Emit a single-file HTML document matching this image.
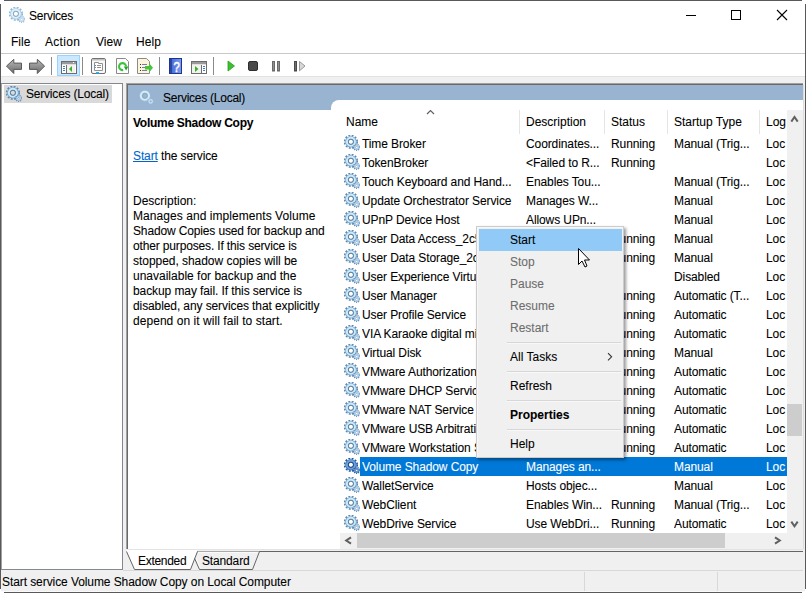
<!DOCTYPE html><html><head><meta charset="utf-8"><style>
*{margin:0;padding:0;box-sizing:border-box}
html,body{width:806px;height:593px;overflow:hidden;background:#fff;font-family:"Liberation Sans", sans-serif;font-size:12px;color:#000;-webkit-text-stroke:0.08px}
.a{position:absolute}
.t{position:absolute;white-space:nowrap;line-height:19px}
.r{letter-spacing:-0.1px}
</style></head><body>
<svg width="0" height="0" style="position:absolute">
<symbol id="gear" viewBox="0 0 16 16">
  <circle cx="6.9" cy="6.8" r="6.3" fill="none" stroke="#5f89b4" stroke-width="1.7" stroke-dasharray="1.9 1.4"/>
  <path d="M1.3000000000000007 6.8 a5.6 5.6 0 1 0 11.2 0 a5.6 5.6 0 1 0 -11.2 0 Z M4.7 6.8 a2.2 2.2 0 1 0 4.4 0 a2.2 2.2 0 1 0 -4.4 0 Z" fill="#719bc3" fill-rule="evenodd"/>
  <circle cx="6.9" cy="6.8" r="4.0" fill="none" stroke="#c8eaf9" stroke-width="2.1"/>
  <circle cx="6.9" cy="6.8" r="2.55" fill="none" stroke="#56708a" stroke-width="0.75"/>
  <circle cx="12.7" cy="12.3" r="3.05" fill="none" stroke="#5f89b4" stroke-width="1.3" stroke-dasharray="1.0 1.13"/>
  <path d="M10.1 12.3 a2.6 2.6 0 1 0 5.2 0 a2.6 2.6 0 1 0 -5.2 0 Z M11.799999999999999 12.3 a0.9 0.9 0 1 0 1.8 0 a0.9 0.9 0 1 0 -1.8 0 Z" fill="#8cb0d2" fill-rule="evenodd"/>
  <circle cx="12.7" cy="12.3" r="1.7" fill="none" stroke="#cde6f5" stroke-width="0.8"/>
</symbol>
<symbol id="gearS" viewBox="0 0 16 16">
  <circle cx="6.9" cy="6.8" r="6.3" fill="none" stroke="#1f5aa6" stroke-width="1.7" stroke-dasharray="1.9 1.4"/>
  <path d="M1.3000000000000007 6.8 a5.6 5.6 0 1 0 11.2 0 a5.6 5.6 0 1 0 -11.2 0 Z M4.7 6.8 a2.2 2.2 0 1 0 4.4 0 a2.2 2.2 0 1 0 -4.4 0 Z" fill="#2d68b2" fill-rule="evenodd"/>
  <circle cx="6.9" cy="6.8" r="4.0" fill="none" stroke="#6e9fd6" stroke-width="2.1"/>
  <circle cx="6.9" cy="6.8" r="2.55" fill="none" stroke="#143a70" stroke-width="0.75"/>
  <circle cx="12.7" cy="12.3" r="3.05" fill="none" stroke="#1f5aa6" stroke-width="1.3" stroke-dasharray="1.0 1.13"/>
  <path d="M10.1 12.3 a2.6 2.6 0 1 0 5.2 0 a2.6 2.6 0 1 0 -5.2 0 Z M11.799999999999999 12.3 a0.9 0.9 0 1 0 1.8 0 a0.9 0.9 0 1 0 -1.8 0 Z" fill="#3a72b8" fill-rule="evenodd"/>
  <circle cx="12.7" cy="12.3" r="1.7" fill="none" stroke="#7eaadc" stroke-width="0.8"/>
</symbol>
<symbol id="gearL" viewBox="0 0 16 16">
  <circle cx="6.9" cy="6.8" r="6.3" fill="none" stroke="#93b6d4" stroke-width="1.7" stroke-dasharray="1.9 1.4"/>
  <path d="M1.3000000000000007 6.8 a5.6 5.6 0 1 0 11.2 0 a5.6 5.6 0 1 0 -11.2 0 Z M4.7 6.8 a2.2 2.2 0 1 0 4.4 0 a2.2 2.2 0 1 0 -4.4 0 Z" fill="#a3c4e2" fill-rule="evenodd"/>
  <circle cx="6.9" cy="6.8" r="4.0" fill="none" stroke="#d8f1fc" stroke-width="2.1"/>
  <circle cx="6.9" cy="6.8" r="2.55" fill="none" stroke="#8599ac" stroke-width="0.75"/>
  <circle cx="12.7" cy="12.3" r="3.05" fill="none" stroke="#93b6d4" stroke-width="1.3" stroke-dasharray="1.0 1.13"/>
  <path d="M10.1 12.3 a2.6 2.6 0 1 0 5.2 0 a2.6 2.6 0 1 0 -5.2 0 Z M11.799999999999999 12.3 a0.9 0.9 0 1 0 1.8 0 a0.9 0.9 0 1 0 -1.8 0 Z" fill="#abc9e4" fill-rule="evenodd"/>
  <circle cx="12.7" cy="12.3" r="1.7" fill="none" stroke="#dcf0fa" stroke-width="0.8"/>
</symbol>
</svg>
<div class="a" style="left:4px;top:0;width:798px;height:1px;background:#595959"></div>
<div class="a" style="left:4px;top:592px;width:798px;height:1px;background:#595959"></div>
<div class="a" style="left:0;top:4px;width:1px;height:585px;background:#595959"></div>
<div class="a" style="left:805px;top:4px;width:1px;height:585px;background:#595959"></div>
<svg class="a" style="left:9px;top:7px" width="16" height="16"><use href="#gearL"/></svg>
<div class="t" style="left:29px;top:7px;letter-spacing:-0.25px">Services</div>
<div class="a" style="left:686px;top:15px;width:10px;height:1px;background:#000"></div>
<div class="a" style="left:731px;top:10px;width:10px;height:10px;border:1px solid #000"></div>
<svg class="a" style="left:776px;top:9px" width="12" height="12"><path d="M1 1L11 11M11 1L1 11" stroke="#000" stroke-width="1.1"/></svg>
<div class="t" style="left:11px;top:33px;letter-spacing:0px">File</div>
<div class="t" style="left:45px;top:33px;letter-spacing:0.3px">Action</div>
<div class="t" style="left:96px;top:33px;letter-spacing:0px">View</div>
<div class="t" style="left:136px;top:33px;letter-spacing:0.1px">Help</div>
<div class="a" style="left:1px;top:53px;width:804px;height:1px;background:#c8c8c8"></div>
<svg class="a" style="left:0;top:54px" width="320" height="22"><defs><linearGradient id="ag" x1="0" y1="0" x2="0" y2="1"><stop offset="0" stop-color="#b8b8b8"/><stop offset="1" stop-color="#6a6a6a"/></linearGradient><linearGradient id="hb" x1="0" y1="0" x2="1" y2="0"><stop offset="0" stop-color="#4b70d8"/><stop offset="1" stop-color="#7c9cec"/></linearGradient></defs><path d="M6.5 12.1 L13.8 5.3 L13.8 9.1 L21.5 9.1 L21.5 15.4 L13.8 15.4 L13.8 19.5 Z" fill="url(#ag)" stroke="#595959" stroke-width="1" stroke-linejoin="round"/><path d="M44.6 12.1 L37.3 5.3 L37.3 9.1 L29.5 9.1 L29.5 15.4 L37.3 15.4 L37.3 19.5 Z" fill="url(#ag)" stroke="#595959" stroke-width="1" stroke-linejoin="round"/><rect x="51" y="3" width="1" height="18" fill="#8a8a8a"/><rect x="82" y="3" width="1" height="18" fill="#8a8a8a"/><rect x="159" y="3" width="1" height="18" fill="#8a8a8a"/><rect x="213" y="3" width="1" height="18" fill="#8a8a8a"/><rect x="57.5" y="1.5" width="22" height="20" fill="#cce8ff" stroke="#99d1ff" stroke-width="1"/><rect x="61.5" y="7.5" width="15" height="12" fill="#fff" stroke="#6d6d6d" stroke-width="1"/><rect x="62" y="8" width="14" height="2" fill="#9a9a9a"/><rect x="73" y="8" width="1" height="1" fill="#fff"/><rect x="62" y="10" width="14" height="1" fill="#e0e0e0"/><rect x="66" y="11" width="1" height="8" fill="#6d6d6d"/><rect x="63" y="12" width="2" height="1" fill="#3d7cc9"/><rect x="63" y="14" width="2" height="1" fill="#3d7cc9"/><rect x="63" y="16" width="2" height="1" fill="#3d7cc9"/><rect x="67" y="11" width="8" height="8" fill="#f2f2f2"/><path d="M69 15 L72 12 L72 18 Z" fill="#3cb01e"/><rect x="91.5" y="4.5" width="14" height="15" rx="1.5" fill="#f8f8f8" stroke="#707070" stroke-width="1"/><rect x="92" y="5" width="13" height="1.5" fill="#c0c0c0"/><path d="M94.5 8.5 H98.5 V9.5 H102.5 V16.5 H94.5 Z" fill="#fff" stroke="#8c9099" stroke-width="1"/><rect x="95" y="11" width="1" height="1" fill="#1aa3f0"/><rect x="97" y="11" width="4" height="1" fill="#909090"/><rect x="95" y="13" width="1" height="1" fill="#909090"/><rect x="97" y="13" width="4" height="1" fill="#909090"/><rect x="96" y="18" width="3" height="1.5" fill="#22b5f5"/><path d="M116.5 4.5 H125.5 L128.5 7.5 V19.5 H116.5 Z" fill="#fdfdfd" stroke="#8a8a8a" stroke-width="1"/><path d="M126.05 12.4 A3.5 3.5 0 1 0 123.2 16.05" fill="none" stroke="#3cc23a" stroke-width="2.1"/><path d="M123.9 12.6 L128.3 12.6 L126.1 16.4 Z" fill="#22a022"/><path d="M137.5 4.5 H146.5 L149.5 7.5 V19.5 H137.5 Z" fill="#fcf5dc" stroke="#8a8a8a" stroke-width="1"/><rect x="140" y="10" width="1" height="1" fill="#303030"/><rect x="140" y="13" width="1" height="1" fill="#303030"/><rect x="140" y="16" width="1" height="1" fill="#303030"/><rect x="142" y="10" width="5" height="1" fill="#7a78b0"/><rect x="142" y="13" width="5" height="1" fill="#7a78b0"/><rect x="142" y="16" width="5" height="1" fill="#7a78b0"/><path d="M145 12 H149 V9 L153 13.8 L149 18.5 V15.5 H145 Z" fill="#49c23c"/><rect x="169.5" y="4.5" width="12" height="15" fill="#3b5fcf" stroke="#1c3590" stroke-width="1"/><rect x="172" y="5" width="9" height="14" fill="url(#hb)"/><rect x="170" y="5" width="2" height="14" fill="#2a44a8"/><text x="0" y="0" transform="translate(176.6 17.6) scale(0.8 1)" font-family="Liberation Sans" font-size="14" fill="#fff" stroke="#fff" stroke-width="0.5" text-anchor="middle">?</text><rect x="191.5" y="7.5" width="15" height="12" fill="#fff" stroke="#6d6d6d" stroke-width="1"/><rect x="192" y="8" width="14" height="2" fill="#9a9a9a"/><rect x="192" y="10" width="14" height="1" fill="#e0e0e0"/><rect x="201" y="11" width="1" height="8" fill="#6d6d6d"/><rect x="203" y="12" width="2" height="1" fill="#3d7cc9"/><rect x="203" y="14" width="2" height="1" fill="#3d7cc9"/><rect x="203" y="16" width="2" height="1" fill="#3d7cc9"/><rect x="192" y="11" width="9" height="8" fill="#f2f2f2"/><path d="M195 12 L198.5 15 L195 18 Z" fill="#3cb01e"/><path d="M228 7 L234.5 12 L228 17 Z" fill="#3cc22e" stroke="#2a9a20" stroke-width="0.8"/><rect x="248.5" y="7.5" width="9" height="9" rx="1.5" fill="#4a4a4a" stroke="#2e2e2e" stroke-width="1"/><rect x="272.5" y="7.5" width="2" height="9.5" fill="#909090" stroke="#6a6a6a" stroke-width="1"/><rect x="277.5" y="7.5" width="2" height="9.5" fill="#909090" stroke="#6a6a6a" stroke-width="1"/><rect x="294.5" y="7.5" width="2" height="9.5" fill="#707070" stroke="#4a4a4a" stroke-width="1"/><path d="M299.5 7.5 L305 12 L299.5 16.8 Z" fill="#d8d8d8" stroke="#9a9a9a" stroke-width="1"/></svg>
<div class="a" style="left:1px;top:76px;width:804px;height:516px;background:#f0f0f0"></div>
<div class="a" style="left:1px;top:83px;width:122px;height:487px;background:#fff;border-top:1px solid #828790;border-left:1px solid #a0a0a0;border-right:1px solid #828790;border-bottom:1px solid #828790"></div>
<div class="a" style="left:4px;top:85px;width:108px;height:18px;background:#d9d9d9"></div>
<svg class="a" style="left:6px;top:86px" width="16" height="16"><use href="#gear"/></svg>
<div class="t" style="left:26px;top:85px;letter-spacing:-0.2px">Services (Local)</div>
<div class="a" style="left:126px;top:83px;width:677px;height:466px;background:#fff;border-top:1px solid #a0a0a0;border-left:1px solid #a0a0a0"></div>
<div class="a" style="left:127px;top:84px;width:676px;height:465px;border-top:1px solid #696969;border-left:1px solid #696969"></div>
<div class="a" style="left:128px;top:85px;width:675px;height:25px;background:#99b4d1"></div>
<div class="a" style="left:1px;top:76px;width:804px;height:1px;background:#e2e2e2"></div>
<svg class="a" style="left:138px;top:89px" width="16" height="16" opacity="0.9"><use href="#gearL"/></svg>
<div class="t" style="left:163px;top:89px;letter-spacing:-0.25px">Services (Local)</div>
<div class="a" style="left:331px;top:100px;width:473px;height:12px;background:#fff;border-top-left-radius:8px"></div>
<div class="t" style="left:133px;top:114px;font-weight:bold;letter-spacing:-0.28px">Volume Shadow Copy</div>
<div class="t" style="left:133px;top:147px;letter-spacing:-0.12px"><span style="color:#0066cc;text-decoration:underline">Start</span> the service</div>
<div class="a" style="left:133px;top:194px;line-height:15px;white-space:nowrap;letter-spacing:0px">Description:</div>
<div class="a" style="left:133px;top:209px;line-height:15px;white-space:nowrap;letter-spacing:0.06px">Manages and implements Volume</div>
<div class="a" style="left:133px;top:224px;line-height:15px;white-space:nowrap;letter-spacing:-0.14px">Shadow Copies used for backup and</div>
<div class="a" style="left:133px;top:239px;line-height:15px;white-space:nowrap;letter-spacing:-0.15px">other purposes. If this service is</div>
<div class="a" style="left:133px;top:254px;line-height:15px;white-space:nowrap;letter-spacing:-0.04px">stopped, shadow copies will be</div>
<div class="a" style="left:133px;top:269px;line-height:15px;white-space:nowrap;letter-spacing:0px">unavailable for backup and the</div>
<div class="a" style="left:133px;top:284px;line-height:15px;white-space:nowrap;letter-spacing:-0.09px">backup may fail. If this service is</div>
<div class="a" style="left:133px;top:299px;line-height:15px;white-space:nowrap;letter-spacing:-0.1px">disabled, any services that explicitly</div>
<div class="a" style="left:133px;top:314px;line-height:15px;white-space:nowrap;letter-spacing:0.05px">depend on it will fail to start.</div>
<div class="t" style="left:346px;top:113px">Name</div>
<svg class="a" style="left:426px;top:109px" width="10" height="6"><path d="M1 5L4.5 1.5L8 5" fill="none" stroke="#606060" stroke-width="1.2"/></svg>
<div class="t" style="left:526px;top:113px;width:77px;overflow:hidden">Description</div>
<div class="t" style="left:611px;top:113px;width:55px;overflow:hidden">Status</div>
<div class="t" style="left:674px;top:113px;width:84px;overflow:hidden">Startup Type</div>
<div class="t" style="left:766px;top:113px;width:21px;overflow:hidden">Log On As</div>
<div class="a" style="left:519px;top:110px;width:1px;height:24px;background:#e5e5e5"></div>
<div class="a" style="left:604px;top:110px;width:1px;height:24px;background:#e5e5e5"></div>
<div class="a" style="left:667px;top:110px;width:1px;height:24px;background:#e5e5e5"></div>
<div class="a" style="left:759px;top:110px;width:1px;height:24px;background:#e5e5e5"></div>
<div class="a" style="left:331px;top:110px;width:456px;height:423px;overflow:hidden">
<svg class="a" style="left:13px;top:25px" width="16" height="16"><use href="#gear"/></svg>
<div class="t" style="left:31px;top:25px;width:157px;height:18px;overflow:hidden;color:#000;letter-spacing:-0.1px">Time Broker</div>
<div class="t" style="left:195px;top:25px;width:78px;height:18px;overflow:hidden;color:#000;letter-spacing:-0.1px">Coordinates...</div>
<div class="t" style="left:280px;top:25px;width:56px;height:18px;overflow:hidden;color:#000;letter-spacing:-0.1px">Running</div>
<div class="t" style="left:343px;top:25px;width:85px;height:18px;overflow:hidden;color:#000;letter-spacing:-0.1px">Manual (Trig...</div>
<div class="t" style="left:435px;top:25px;width:21px;height:18px;overflow:hidden;color:#000;letter-spacing:-0.1px">Loc</div>
<svg class="a" style="left:13px;top:44px" width="16" height="16"><use href="#gear"/></svg>
<div class="t" style="left:31px;top:44px;width:157px;height:18px;overflow:hidden;color:#000;letter-spacing:-0.1px">TokenBroker</div>
<div class="t" style="left:195px;top:44px;width:78px;height:18px;overflow:hidden;color:#000;letter-spacing:-0.1px">&lt;Failed to R...</div>
<div class="t" style="left:280px;top:44px;width:56px;height:18px;overflow:hidden;color:#000;letter-spacing:-0.1px">Running</div>
<div class="t" style="left:435px;top:44px;width:21px;height:18px;overflow:hidden;color:#000;letter-spacing:-0.1px">Loc</div>
<svg class="a" style="left:13px;top:63px" width="16" height="16"><use href="#gear"/></svg>
<div class="t" style="left:31px;top:63px;width:157px;height:18px;overflow:hidden;color:#000;letter-spacing:-0.1px">Touch Keyboard and Hand...</div>
<div class="t" style="left:195px;top:63px;width:78px;height:18px;overflow:hidden;color:#000;letter-spacing:-0.1px">Enables Tou...</div>
<div class="t" style="left:343px;top:63px;width:85px;height:18px;overflow:hidden;color:#000;letter-spacing:-0.1px">Manual (Trig...</div>
<div class="t" style="left:435px;top:63px;width:21px;height:18px;overflow:hidden;color:#000;letter-spacing:-0.1px">Loc</div>
<svg class="a" style="left:13px;top:82px" width="16" height="16"><use href="#gear"/></svg>
<div class="t" style="left:31px;top:82px;width:157px;height:18px;overflow:hidden;color:#000;letter-spacing:-0.1px">Update Orchestrator Service</div>
<div class="t" style="left:195px;top:82px;width:78px;height:18px;overflow:hidden;color:#000;letter-spacing:-0.1px">Manages W...</div>
<div class="t" style="left:343px;top:82px;width:85px;height:18px;overflow:hidden;color:#000;letter-spacing:-0.1px">Manual</div>
<div class="t" style="left:435px;top:82px;width:21px;height:18px;overflow:hidden;color:#000;letter-spacing:-0.1px">Loc</div>
<svg class="a" style="left:13px;top:101px" width="16" height="16"><use href="#gear"/></svg>
<div class="t" style="left:31px;top:101px;width:157px;height:18px;overflow:hidden;color:#000;letter-spacing:-0.1px">UPnP Device Host</div>
<div class="t" style="left:195px;top:101px;width:78px;height:18px;overflow:hidden;color:#000;letter-spacing:-0.1px">Allows UPn...</div>
<div class="t" style="left:343px;top:101px;width:85px;height:18px;overflow:hidden;color:#000;letter-spacing:-0.1px">Manual</div>
<div class="t" style="left:435px;top:101px;width:21px;height:18px;overflow:hidden;color:#000;letter-spacing:-0.1px">Loc</div>
<svg class="a" style="left:13px;top:120px" width="16" height="16"><use href="#gear"/></svg>
<div class="t" style="left:31px;top:120px;width:157px;height:18px;overflow:hidden;color:#000;letter-spacing:-0.1px">User Data Access_2c5c5b6</div>
<div class="t" style="left:195px;top:120px;width:78px;height:18px;overflow:hidden;color:#000;letter-spacing:-0.1px">Provides ap...</div>
<div class="t" style="left:280px;top:120px;width:56px;height:18px;overflow:hidden;color:#000;letter-spacing:-0.1px">Running</div>
<div class="t" style="left:343px;top:120px;width:85px;height:18px;overflow:hidden;color:#000;letter-spacing:-0.1px">Manual</div>
<div class="t" style="left:435px;top:120px;width:21px;height:18px;overflow:hidden;color:#000;letter-spacing:-0.1px">Loc</div>
<svg class="a" style="left:13px;top:139px" width="16" height="16"><use href="#gear"/></svg>
<div class="t" style="left:31px;top:139px;width:157px;height:18px;overflow:hidden;color:#000;letter-spacing:-0.1px">User Data Storage_2c5c5b6</div>
<div class="t" style="left:195px;top:139px;width:78px;height:18px;overflow:hidden;color:#000;letter-spacing:-0.1px">Handles sto...</div>
<div class="t" style="left:280px;top:139px;width:56px;height:18px;overflow:hidden;color:#000;letter-spacing:-0.1px">Running</div>
<div class="t" style="left:343px;top:139px;width:85px;height:18px;overflow:hidden;color:#000;letter-spacing:-0.1px">Manual</div>
<div class="t" style="left:435px;top:139px;width:21px;height:18px;overflow:hidden;color:#000;letter-spacing:-0.1px">Loc</div>
<svg class="a" style="left:13px;top:158px" width="16" height="16"><use href="#gear"/></svg>
<div class="t" style="left:31px;top:158px;width:157px;height:18px;overflow:hidden;color:#000;letter-spacing:-0.1px">User Experience Virtualiz...</div>
<div class="t" style="left:195px;top:158px;width:78px;height:18px;overflow:hidden;color:#000;letter-spacing:-0.1px">Provides su...</div>
<div class="t" style="left:343px;top:158px;width:85px;height:18px;overflow:hidden;color:#000;letter-spacing:-0.1px">Disabled</div>
<div class="t" style="left:435px;top:158px;width:21px;height:18px;overflow:hidden;color:#000;letter-spacing:-0.1px">Loc</div>
<svg class="a" style="left:13px;top:177px" width="16" height="16"><use href="#gear"/></svg>
<div class="t" style="left:31px;top:177px;width:157px;height:18px;overflow:hidden;color:#000;letter-spacing:-0.1px">User Manager</div>
<div class="t" style="left:195px;top:177px;width:78px;height:18px;overflow:hidden;color:#000;letter-spacing:-0.1px">User Manag...</div>
<div class="t" style="left:280px;top:177px;width:56px;height:18px;overflow:hidden;color:#000;letter-spacing:-0.1px">Running</div>
<div class="t" style="left:343px;top:177px;width:85px;height:18px;overflow:hidden;color:#000;letter-spacing:-0.1px">Automatic (T...</div>
<div class="t" style="left:435px;top:177px;width:21px;height:18px;overflow:hidden;color:#000;letter-spacing:-0.1px">Loc</div>
<svg class="a" style="left:13px;top:196px" width="16" height="16"><use href="#gear"/></svg>
<div class="t" style="left:31px;top:196px;width:157px;height:18px;overflow:hidden;color:#000;letter-spacing:-0.1px">User Profile Service</div>
<div class="t" style="left:195px;top:196px;width:78px;height:18px;overflow:hidden;color:#000;letter-spacing:-0.1px">This service ...</div>
<div class="t" style="left:280px;top:196px;width:56px;height:18px;overflow:hidden;color:#000;letter-spacing:-0.1px">Running</div>
<div class="t" style="left:343px;top:196px;width:85px;height:18px;overflow:hidden;color:#000;letter-spacing:-0.1px">Automatic</div>
<div class="t" style="left:435px;top:196px;width:21px;height:18px;overflow:hidden;color:#000;letter-spacing:-0.1px">Loc</div>
<svg class="a" style="left:13px;top:215px" width="16" height="16"><use href="#gear"/></svg>
<div class="t" style="left:31px;top:215px;width:157px;height:18px;overflow:hidden;color:#000;letter-spacing:-0.1px">VIA Karaoke digital mixer...</div>
<div class="t" style="left:280px;top:215px;width:56px;height:18px;overflow:hidden;color:#000;letter-spacing:-0.1px">Running</div>
<div class="t" style="left:343px;top:215px;width:85px;height:18px;overflow:hidden;color:#000;letter-spacing:-0.1px">Automatic</div>
<div class="t" style="left:435px;top:215px;width:21px;height:18px;overflow:hidden;color:#000;letter-spacing:-0.1px">Loc</div>
<svg class="a" style="left:13px;top:234px" width="16" height="16"><use href="#gear"/></svg>
<div class="t" style="left:31px;top:234px;width:157px;height:18px;overflow:hidden;color:#000;letter-spacing:-0.1px">Virtual Disk</div>
<div class="t" style="left:195px;top:234px;width:78px;height:18px;overflow:hidden;color:#000;letter-spacing:-0.1px">Provides m...</div>
<div class="t" style="left:280px;top:234px;width:56px;height:18px;overflow:hidden;color:#000;letter-spacing:-0.1px">Running</div>
<div class="t" style="left:343px;top:234px;width:85px;height:18px;overflow:hidden;color:#000;letter-spacing:-0.1px">Manual</div>
<div class="t" style="left:435px;top:234px;width:21px;height:18px;overflow:hidden;color:#000;letter-spacing:-0.1px">Loc</div>
<svg class="a" style="left:13px;top:253px" width="16" height="16"><use href="#gear"/></svg>
<div class="t" style="left:31px;top:253px;width:157px;height:18px;overflow:hidden;color:#000;letter-spacing:-0.1px">VMware Authorization Se...</div>
<div class="t" style="left:195px;top:253px;width:78px;height:18px;overflow:hidden;color:#000;letter-spacing:-0.1px">Authorizati...</div>
<div class="t" style="left:280px;top:253px;width:56px;height:18px;overflow:hidden;color:#000;letter-spacing:-0.1px">Running</div>
<div class="t" style="left:343px;top:253px;width:85px;height:18px;overflow:hidden;color:#000;letter-spacing:-0.1px">Automatic</div>
<div class="t" style="left:435px;top:253px;width:21px;height:18px;overflow:hidden;color:#000;letter-spacing:-0.1px">Loc</div>
<svg class="a" style="left:13px;top:272px" width="16" height="16"><use href="#gear"/></svg>
<div class="t" style="left:31px;top:272px;width:157px;height:18px;overflow:hidden;color:#000;letter-spacing:-0.1px">VMware DHCP Service</div>
<div class="t" style="left:195px;top:272px;width:78px;height:18px;overflow:hidden;color:#000;letter-spacing:-0.1px">DHCP servi...</div>
<div class="t" style="left:280px;top:272px;width:56px;height:18px;overflow:hidden;color:#000;letter-spacing:-0.1px">Running</div>
<div class="t" style="left:343px;top:272px;width:85px;height:18px;overflow:hidden;color:#000;letter-spacing:-0.1px">Automatic</div>
<div class="t" style="left:435px;top:272px;width:21px;height:18px;overflow:hidden;color:#000;letter-spacing:-0.1px">Loc</div>
<svg class="a" style="left:13px;top:291px" width="16" height="16"><use href="#gear"/></svg>
<div class="t" style="left:31px;top:291px;width:157px;height:18px;overflow:hidden;color:#000;letter-spacing:-0.1px">VMware NAT Service</div>
<div class="t" style="left:195px;top:291px;width:78px;height:18px;overflow:hidden;color:#000;letter-spacing:-0.1px">Network ad...</div>
<div class="t" style="left:280px;top:291px;width:56px;height:18px;overflow:hidden;color:#000;letter-spacing:-0.1px">Running</div>
<div class="t" style="left:343px;top:291px;width:85px;height:18px;overflow:hidden;color:#000;letter-spacing:-0.1px">Automatic</div>
<div class="t" style="left:435px;top:291px;width:21px;height:18px;overflow:hidden;color:#000;letter-spacing:-0.1px">Loc</div>
<svg class="a" style="left:13px;top:310px" width="16" height="16"><use href="#gear"/></svg>
<div class="t" style="left:31px;top:310px;width:157px;height:18px;overflow:hidden;color:#000;letter-spacing:-0.1px">VMware USB Arbitration ...</div>
<div class="t" style="left:195px;top:310px;width:78px;height:18px;overflow:hidden;color:#000;letter-spacing:-0.1px">Arbitration ...</div>
<div class="t" style="left:280px;top:310px;width:56px;height:18px;overflow:hidden;color:#000;letter-spacing:-0.1px">Running</div>
<div class="t" style="left:343px;top:310px;width:85px;height:18px;overflow:hidden;color:#000;letter-spacing:-0.1px">Automatic</div>
<div class="t" style="left:435px;top:310px;width:21px;height:18px;overflow:hidden;color:#000;letter-spacing:-0.1px">Loc</div>
<svg class="a" style="left:13px;top:329px" width="16" height="16"><use href="#gear"/></svg>
<div class="t" style="left:31px;top:329px;width:157px;height:18px;overflow:hidden;color:#000;letter-spacing:-0.1px">VMware Workstation Server</div>
<div class="t" style="left:195px;top:329px;width:78px;height:18px;overflow:hidden;color:#000;letter-spacing:-0.1px">Remote acc...</div>
<div class="t" style="left:280px;top:329px;width:56px;height:18px;overflow:hidden;color:#000;letter-spacing:-0.1px">Running</div>
<div class="t" style="left:343px;top:329px;width:85px;height:18px;overflow:hidden;color:#000;letter-spacing:-0.1px">Automatic</div>
<div class="t" style="left:435px;top:329px;width:21px;height:18px;overflow:hidden;color:#000;letter-spacing:-0.1px">Loc</div>
<div class="a" style="left:29px;top:347px;width:427px;height:19px;background:#0078d7"></div>
<svg class="a" style="left:13px;top:348px" width="16" height="16"><use href="#gearS"/></svg>
<div class="t" style="left:31px;top:348px;width:157px;height:18px;overflow:hidden;color:#fff;letter-spacing:-0.1px">Volume Shadow Copy</div>
<div class="t" style="left:195px;top:348px;width:78px;height:18px;overflow:hidden;color:#fff;letter-spacing:-0.1px">Manages an...</div>
<div class="t" style="left:343px;top:348px;width:85px;height:18px;overflow:hidden;color:#fff;letter-spacing:-0.1px">Manual</div>
<div class="t" style="left:435px;top:348px;width:21px;height:18px;overflow:hidden;color:#fff;letter-spacing:-0.1px">Loc</div>
<svg class="a" style="left:13px;top:367px" width="16" height="16"><use href="#gear"/></svg>
<div class="t" style="left:31px;top:367px;width:157px;height:18px;overflow:hidden;color:#000;letter-spacing:-0.1px">WalletService</div>
<div class="t" style="left:195px;top:367px;width:78px;height:18px;overflow:hidden;color:#000;letter-spacing:-0.1px">Hosts objec...</div>
<div class="t" style="left:343px;top:367px;width:85px;height:18px;overflow:hidden;color:#000;letter-spacing:-0.1px">Manual</div>
<div class="t" style="left:435px;top:367px;width:21px;height:18px;overflow:hidden;color:#000;letter-spacing:-0.1px">Loc</div>
<svg class="a" style="left:13px;top:386px" width="16" height="16"><use href="#gear"/></svg>
<div class="t" style="left:31px;top:386px;width:157px;height:18px;overflow:hidden;color:#000;letter-spacing:-0.1px">WebClient</div>
<div class="t" style="left:195px;top:386px;width:78px;height:18px;overflow:hidden;color:#000;letter-spacing:-0.1px">Enables Win...</div>
<div class="t" style="left:280px;top:386px;width:56px;height:18px;overflow:hidden;color:#000;letter-spacing:-0.1px">Running</div>
<div class="t" style="left:343px;top:386px;width:85px;height:18px;overflow:hidden;color:#000;letter-spacing:-0.1px">Manual (Trig...</div>
<div class="t" style="left:435px;top:386px;width:21px;height:18px;overflow:hidden;color:#000;letter-spacing:-0.1px">Loc</div>
<svg class="a" style="left:13px;top:405px" width="16" height="16"><use href="#gear"/></svg>
<div class="t" style="left:31px;top:405px;width:157px;height:18px;overflow:hidden;color:#000;letter-spacing:-0.1px">WebDrive Service</div>
<div class="t" style="left:195px;top:405px;width:78px;height:18px;overflow:hidden;color:#000;letter-spacing:-0.1px">Use WebDri...</div>
<div class="t" style="left:280px;top:405px;width:56px;height:18px;overflow:hidden;color:#000;letter-spacing:-0.1px">Running</div>
<div class="t" style="left:343px;top:405px;width:85px;height:18px;overflow:hidden;color:#000;letter-spacing:-0.1px">Automatic</div>
<div class="t" style="left:435px;top:405px;width:21px;height:18px;overflow:hidden;color:#000;letter-spacing:-0.1px">Loc</div>
</div>
<div class="a" style="left:787px;top:110px;width:16px;height:423px;background:#f0f0f0"></div><div class="a" style="left:803px;top:85px;width:1px;height:464px;background:#dcdcdc"></div>
<svg class="a" style="left:787px;top:110px" width="16" height="16"><path d="M4.3 11.6L7.5 7L10.7 11.6" fill="none" stroke="#606060" stroke-width="2"/></svg>
<svg class="a" style="left:787px;top:516px" width="16" height="16"><path d="M4.3 5.6L7.5 10.2L10.7 5.6" fill="none" stroke="#606060" stroke-width="2"/></svg>
<div class="a" style="left:787px;top:404px;width:15px;height:32px;background:#cdcdcd"></div>
<div class="a" style="left:340px;top:533px;width:463px;height:16px;background:#f0f0f0"></div>
<div class="a" style="left:357px;top:533px;width:368px;height:15px;background:#cdcdcd"></div>
<svg class="a" style="left:340px;top:533px" width="17" height="16"><path d="M11 4.3L6.2 7.5L11 10.7" fill="none" stroke="#606060" stroke-width="2"/></svg>
<svg class="a" style="left:770px;top:533px" width="17" height="16"><path d="M5 4.3L9.8 7.5L5 10.7" fill="none" stroke="#606060" stroke-width="2"/></svg>
<div class="a" style="left:129px;top:549px;width:674px;height:1px;background:#e3e3e3"></div>
<svg class="a" style="left:120px;top:545px" width="686" height="26"><rect x="77" y="6" width="606" height="1" fill="#646464"/><path d="M71.5 6.5 L79.5 24.5 L132.5 24.5 L139.5 6.5" fill="#f0f0f0" stroke="#646464" stroke-width="1"/><path d="M73.5 7.5 L80.5 23.5 M78 7.5 H137.5" fill="none" stroke="#fafafa" stroke-width="1"/><path d="M6.5 5 L14.5 24.5 L70.5 24.5 L77.5 5 Z" fill="#fff"/><path d="M6.5 6.5 L14.5 24.5 L70.5 24.5 L77.5 6.5" fill="none" stroke="#646464" stroke-width="1"/></svg>
<div class="t" style="left:138px;top:552px;letter-spacing:-0.3px">Extended</div>
<div class="t" style="left:202px;top:552px;letter-spacing:-0.15px">Standard</div>
<div class="a" style="left:123px;top:570px;width:680px;height:1px;background:#d8d8d8"></div>
<div class="t" style="left:2px;top:573px;letter-spacing:-0.08px">Start service Volume Shadow Copy on Local Computer</div>
<div class="a" style="left:584px;top:572px;width:1px;height:19px;background:#d8d8d8"></div>
<div class="a" style="left:717px;top:572px;width:1px;height:19px;background:#d8d8d8"></div>
<div class="a" style="left:1px;top:591px;width:804px;height:1px;background:#fafafa"></div>
<div class="a" style="left:476px;top:226px;width:148px;height:232px;background:#f0f0f0;border:1px solid #cccccc;box-shadow:2px 2px 3px rgba(0,0,0,0.4)"></div>
<div class="a" style="left:477px;top:227px;width:146px;height:1px;background:#f8f8f8"></div><div class="a" style="left:477px;top:227px;width:1px;height:230px;background:#f8f8f8"></div>
<div class="a" style="left:479px;top:229px;width:143px;height:22px;background:#91c9f7"></div>
<div class="t" style="left:510px;top:231px;color:#000;">Start</div>
<div class="t" style="left:510px;top:253px;color:#6d6d6d;">Stop</div>
<div class="t" style="left:510px;top:275px;color:#6d6d6d;">Pause</div>
<div class="t" style="left:510px;top:297px;color:#6d6d6d;">Resume</div>
<div class="t" style="left:510px;top:319px;color:#6d6d6d;">Restart</div>
<div class="t" style="left:510px;top:348px;color:#000;">All Tasks</div>
<div class="t" style="left:510px;top:377px;color:#000;">Refresh</div>
<div class="t" style="left:510px;top:406px;color:#000;font-weight:bold;">Properties</div>
<div class="t" style="left:510px;top:435px;color:#000;">Help</div>
<div class="a" style="left:507px;top:342px;width:114px;height:1px;background:#d7d7d7"></div><div class="a" style="left:507px;top:343px;width:114px;height:1px;background:#f8f8f8"></div>
<div class="a" style="left:507px;top:371px;width:114px;height:1px;background:#d7d7d7"></div><div class="a" style="left:507px;top:372px;width:114px;height:1px;background:#f8f8f8"></div>
<div class="a" style="left:507px;top:400px;width:114px;height:1px;background:#d7d7d7"></div><div class="a" style="left:507px;top:401px;width:114px;height:1px;background:#f8f8f8"></div>
<div class="a" style="left:507px;top:429px;width:114px;height:1px;background:#d7d7d7"></div><div class="a" style="left:507px;top:430px;width:114px;height:1px;background:#f8f8f8"></div>
<svg class="a" style="left:606px;top:351px" width="8" height="12"><path d="M2 2.2L5.6 5.8L2 9.4" fill="none" stroke="#333" stroke-width="1.1"/></svg>
<svg class="a" style="left:577px;top:247px" width="16" height="22"><path d="M1.5 1.5 L1.5 17.5 L5 14 L8 20 L10 19 L7.5 13 L12.5 13 Z" fill="#fff" stroke="#000" stroke-width="1"/></svg>
</body></html>
